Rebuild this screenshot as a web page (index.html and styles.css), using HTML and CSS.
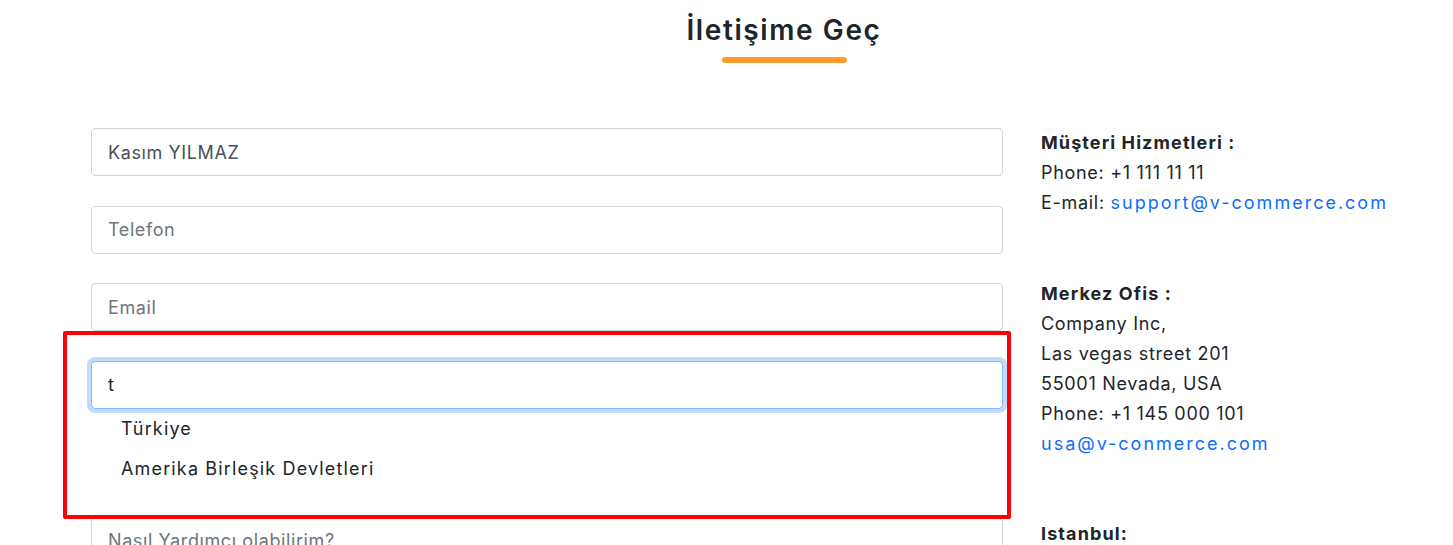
FILE: index.html
```html
<!DOCTYPE html>
<html lang="tr">
<head>
<meta charset="utf-8">
<title>İletişime Geç</title>
<link rel="stylesheet" href="styles.css">
</head>
<body>
<header class="page-head">
  <div class="title-wrap">
    <h1 class="title">İletişime Geç</h1>
    <span class="title-bar"></span>
  </div>
</header>
<main class="contact">
  <form class="form">
    <div class="field"><input class="input" type="text" value="Kasım YILMAZ"></div>
    <div class="field"><input class="input" type="text" placeholder="Telefon"></div>
    <div class="field"><input class="input" type="text" placeholder="Email"></div>
    <div class="field">
      <input class="input input-focus" type="text" value="t">
      <ul class="suggest">
        <li class="suggest-item">Türkiye</li>
        <li class="suggest-item">Amerika Birleşik Devletleri</li>
      </ul>
    </div>
    <div class="field"><textarea class="input textarea" placeholder="Nasıl Yardımcı olabilirim?"></textarea></div>
  </form>
  <aside class="info">
    <div class="info-block">
      <div class="info-title">Müşteri Hizmetleri :</div>
      <div>Phone: +1 111 11 11</div>
      <div>E-mail: <a class="link" href="#">support@v-commerce.com</a></div>
    </div>
    <div class="info-block">
      <div class="info-title">Merkez Ofis :</div>
      <div>Company Inc,</div>
      <div>Las vegas street 201</div>
      <div>55001 Nevada, USA</div>
      <div>Phone: +1 145 000 101</div>
      <div><a class="link" href="#">usa@v-conmerce.com</a></div>
    </div>
    <div class="info-block">
      <div class="info-title">Istanbul:</div>
    </div>
  </aside>
</main>
<div class="highlight"></div>
</body>
</html>
```
FILE: styles.css
```css
html, body {
  margin: 0;
  padding: 0;
  background: #fff;
  height: 545px;
  overflow: hidden;
}
body {
  font-family: Inter, "Open Sans", sans-serif;
  color: #212529;
  font-size: 18px;
  letter-spacing: 0.7px;
  position: relative;
}
.page-head {
  display: flex;
  justify-content: center;
  padding-left: 115px;
  padding-top: 10px;
}
.title-wrap {
  display: flex;
  flex-direction: column;
  align-items: center;
}
.title {
  margin: 0;
  font-size: 28px;
  font-weight: 600;
  line-height: 40px;
  letter-spacing: 1.6px;
  color: #212529;
}
.title-bar {
  display: block;
  width: 125px;
  height: 6px;
  border-radius: 3px;
  background: #fd9a30;
  margin-top: 7px;
}
.contact {
  display: flex;
  gap: 38px;
  padding-left: 91px;
  margin-top: 65px;
}
.form {
  width: 912px;
  flex: none;
  margin: 0;
}
.field {
  margin-bottom: 29.5px;
}
.input {
  display: block;
  box-sizing: border-box;
  width: 100%;
  height: 48px;
  margin: 0;
  padding: 0 16px;
  border: 1px solid #ced4da;
  border-radius: 4px;
  font-family: inherit;
  font-size: 18px;
  letter-spacing: 0.6px;
  color: #495057;
  background: #fff;
  outline: none;
}
.input::placeholder {
  color: #6c757d;
}
.input-focus {
  border-color: #86b7fe;
  box-shadow: 0 0 0 4px rgba(13, 110, 253, 0.25);
  color: #212529;
}
.textarea {
  height: 120px;
  padding-top: 11px;
  resize: none;
}
.suggest {
  list-style: none;
  margin: 0;
  padding: 0 0 0 30px;
}
.suggest-item {
  line-height: 40px;
  letter-spacing: 1.15px;
  color: #212529;
}
.info {
  line-height: 30px;
  font-size: 18px;
}
.info-block {
  margin-bottom: 60.5px;
}
.info-title {
  font-weight: 700;
  letter-spacing: 1.1px;
}
.link {
  color: #0d6efd;
  text-decoration: none;
  letter-spacing: 2px;
}
.highlight {
  position: absolute;
  left: 63px;
  top: 331px;
  width: 948px;
  height: 188px;
  box-sizing: border-box;
  border: 4px solid #ff0000;
  border-radius: 2px;
  pointer-events: none;
}
```
